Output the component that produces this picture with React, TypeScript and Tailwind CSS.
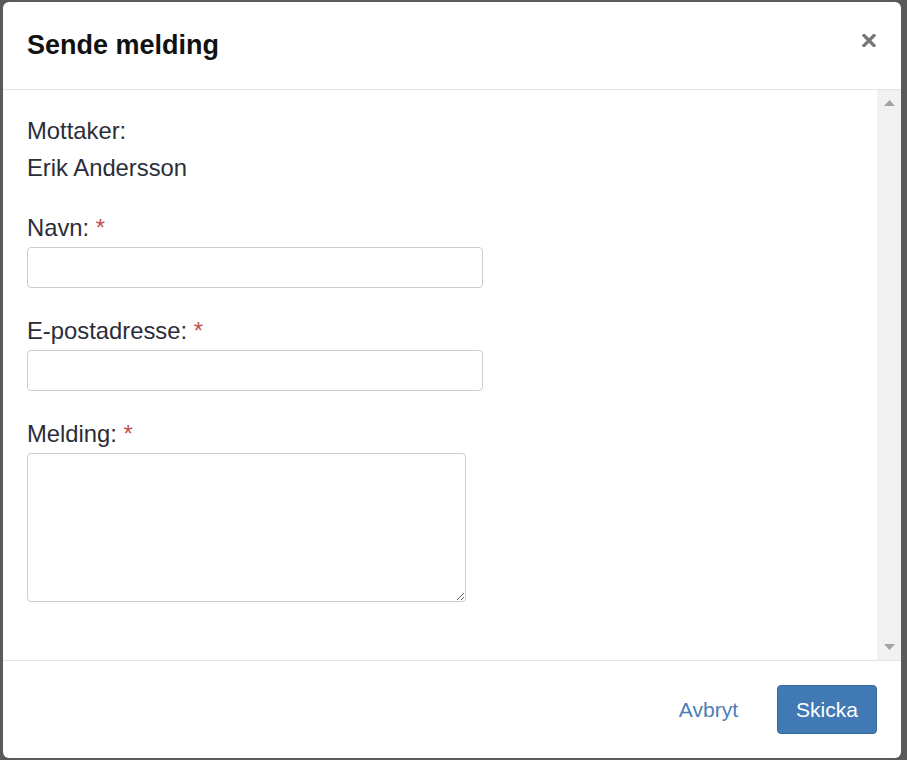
import { useState } from "react"

const font = { fontFamily: '"Liberation Sans", Arial, sans-serif' }

function Field({ label, children, first }: { label: string; children: React.ReactNode; first?: boolean }) {
  return (
    <div className={first ? "mt-[29px]" : "mt-[27px]"}>
      <div className="h-[31px] leading-[31px] mb-[4px] text-[23.8px] text-[#2b2d38]">
        {label} <span className="text-[#c0504d]">*</span>
      </div>
      {children}
    </div>
  )
}

export default function App() {
  const [name, setName] = useState("")
  const [email, setEmail] = useState("")
  const [msg, setMsg] = useState("")

  return (
    <div className="h-[760px] w-[907px] bg-[#5a5a5a] pt-[2px] pl-[3px] overflow-hidden" style={font}>
      <div className="w-[898px] h-[756px] bg-white rounded-[6px] flex flex-col overflow-hidden">
        {/* Header */}
        <div className="h-[88px] shrink-0 border-b border-[#e5e5e5] flex items-center justify-between pl-[24px] pr-[25px]">
          <h4 className="text-[27px] font-bold text-[#111]">Sende melding</h4>
          <button className="mt-[-10px] text-[#777]" aria-label="Lukk">
            <svg width="14" height="13" viewBox="0 0 14 13">
              <path d="M2 1.5 L12 11.5 M12 1.5 L2 11.5" stroke="currentColor" strokeWidth="3.2" strokeLinecap="square" />
            </svg>
          </button>
        </div>

        {/* Body */}
        <div className="h-[570px] shrink-0 flex">
          <div className="flex-1 pl-[24px] pt-[25px]">
            <div className="h-[31px] leading-[31px] text-[23.8px] text-[#2b2d38]">Mottaker:</div>
            <div className="h-[31px] leading-[31px] mt-[6px] text-[23.8px] text-[#2b2d38]">Erik Andersson</div>

            <Field label="Navn:" first>
              <input value={name} onChange={e => setName(e.target.value)}
                className="block w-[456px] h-[41px] border border-[#ccc] rounded-[4px] px-3 text-[20px] outline-none" />
            </Field>
            <Field label="E-postadresse:">
              <input value={email} onChange={e => setEmail(e.target.value)}
                className="block w-[456px] h-[41px] border border-[#ccc] rounded-[4px] px-3 text-[20px] outline-none" />
            </Field>
            <Field label="Melding:">
              <textarea value={msg} onChange={e => setMsg(e.target.value)}
                className="block w-[439px] h-[149px] border border-[#ccc] rounded-[4px] px-3 py-2 text-[20px] outline-none" />
            </Field>
          </div>

          {/* scrollbar */}
          <div className="w-[24px] bg-[#f1f1f1] flex flex-col items-center justify-between py-[10px]">
            <svg width="11" height="6" viewBox="0 0 11 6"><path d="M5.5 0 L11 6 L0 6 Z" fill="#a3a3a3" /></svg>
            <svg width="11" height="6" viewBox="0 0 11 6"><path d="M0 0 L11 0 L5.5 6 Z" fill="#a3a3a3" /></svg>
          </div>
        </div>

        {/* Footer */}
        <div className="flex-1 border-t border-[#e5e5e5] flex items-center justify-end pr-[24px]">
          <button className="h-[49px] px-[19px] text-[21px] text-[#4a80b9] mr-[20px]">Avbryt</button>
          <button className="h-[49px] w-[100px] rounded-[4px] bg-[#4179b5] border border-[#38699c] text-white text-[21px]">Skicka</button>
        </div>
      </div>
    </div>
  )
}
